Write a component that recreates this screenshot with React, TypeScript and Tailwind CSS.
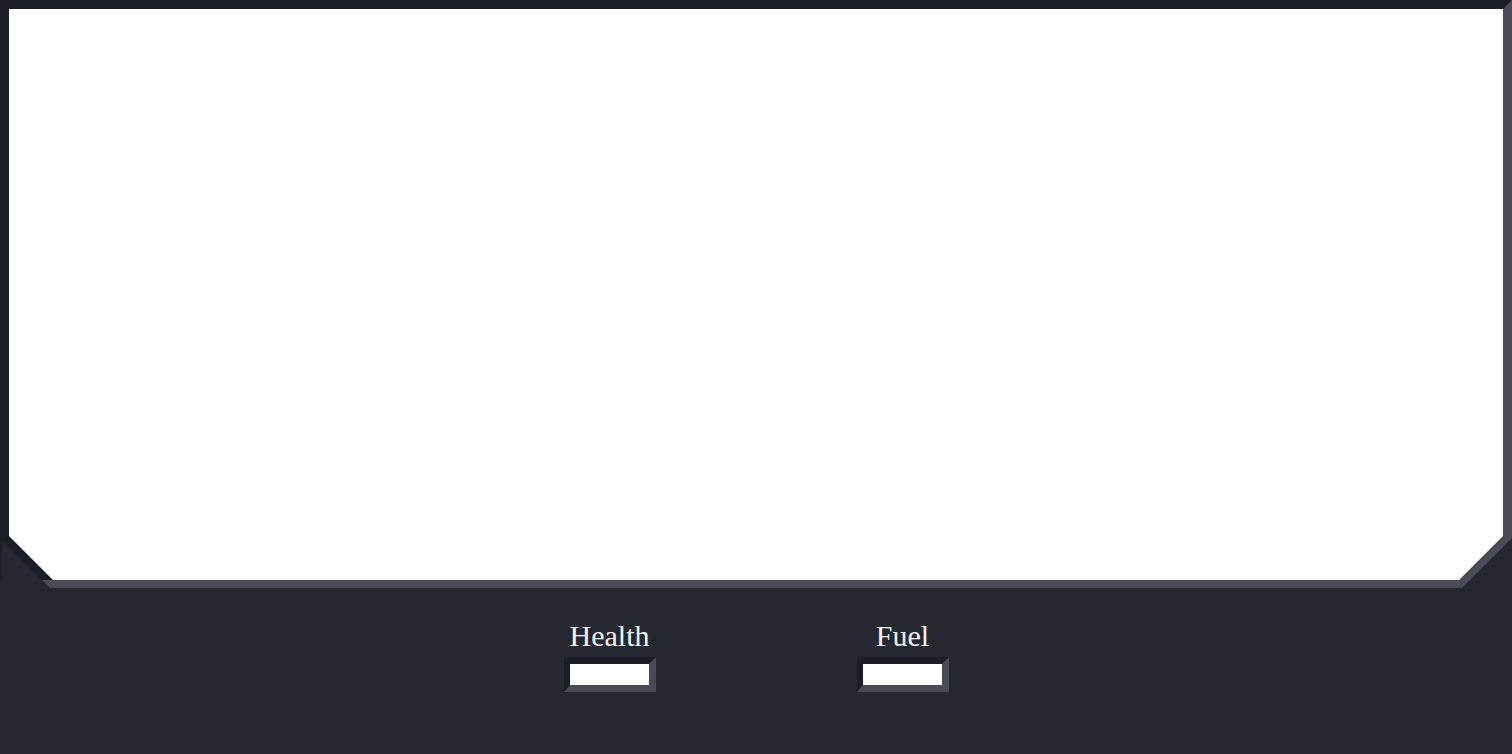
import { FC } from "react";

interface GaugeProps {
  label: string;
}

const Gauge: FC<GaugeProps> = ({ label }) => {
  return (
    <div className="flex flex-col items-center">
      <span className="text-[30px] leading-[33px] text-[#f4f4f6]">{label}</span>
      <div className="mt-[5px] border-solid border-t-[7px] border-l-[6px] border-r-[7px] border-b-[7px] border-t-[#1c1e26] border-l-[#1c1e26] border-r-[#4a4b57] border-b-[#4a4b57]">
        <div className="w-[79px] h-[21px] bg-white" />
      </div>
    </div>
  );
};

export default function App() {
  return (
    <div
      className="min-h-screen bg-[#262831] flex flex-col"
      style={{ fontFamily: '"Liberation Serif", "Times New Roman", serif' }}
    >
      {/* play area */}
      <div className="h-[588px] border-solid border-t-[9px] border-l-[9px] border-r-[9px] border-b-[8px] border-t-[#1c1e26] border-l-[#1c1e26] border-r-[#4a4b57] border-b-[#4a4b57] bg-[linear-gradient(to_right,#1c1e26_50%,#4a4b57_50%)] [clip-path:polygon(0_0,100%_0,100%_calc(100%-50px),calc(100%-50px)_100%,50px_100%,2px_calc(100%-48px),2px_calc(100%-8px),0_calc(100%-8px))]">
        <div className="w-full h-full bg-white [clip-path:polygon(0_0,100%_0,100%_calc(100%-44px),calc(100%-44px)_100%,44px_100%,0_calc(100%-44px))]" />
      </div>

      <div className="flex justify-center gap-[201px] pt-[31px]">
        <Gauge label="Health" />
        <Gauge label="Fuel" />
      </div>
    </div>
  );
}
